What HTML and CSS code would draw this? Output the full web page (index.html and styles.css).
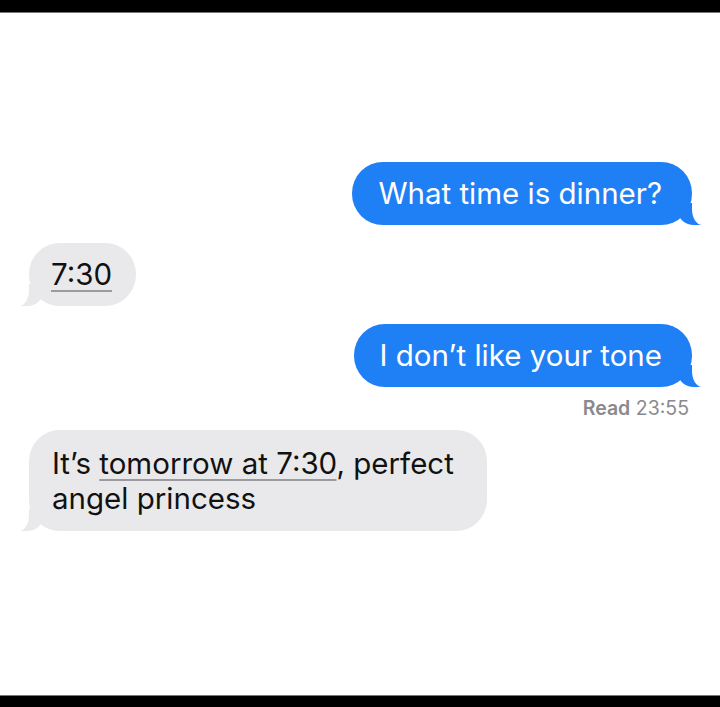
FILE: index.html
```html
<!DOCTYPE html>
<html lang="en">
<head>
  <meta charset="UTF-8">
  <meta name="viewport" content="width=device-width, initial-scale=1.0">
  <title>Messages</title>
  <link rel="stylesheet" href="styles.css">
</head>
<body>
  <div class="screen">
    <div class="bar bar-top"></div>

    <div class="thread">
      <div class="bubble sent">What time is dinner?</div>
      <div class="bubble received"><span class="link">7:30</span></div>
      <div class="bubble sent">I don’t like your tone</div>
      <div class="receipt"><strong>Read</strong> 23:55</div>
      <div class="bubble received wide">It’s <span class="link">tomorrow at 7:30</span>, perfect angel princess</div>
    </div>

    <div class="bar bar-bottom"></div>
  </div>
</body>
</html>
```

FILE: styles.css
```css
body {
  margin: 0;
  background: #fff;
  font-family: 'Inter', 'Liberation Sans', sans-serif;
  color: #111;
}
.screen {
  height: 707px;
  display: flex;
  flex-direction: column;
}
.bar {
  background: #000;
}
.bar-top {
  height: 12px;
  border-bottom: 1px solid #777;
}
.bar-bottom {
  height: 11px;
  border-top: 1px solid #777;
}
.thread {
  flex: 1;
  display: flex;
  flex-direction: column;
  padding: 149px 28px 0 29px;
}
.bubble {
  position: relative;
  font-size: 29.5px;
  line-height: 35px;
  padding: 14px 30px 14px 26px;
  border-radius: 31px;
  max-width: 420px;
}
.bubble + .bubble {
  margin-top: 18px;
}
.sent {
  align-self: flex-end;
  background: #1f7ff5;
  color: #fff;
}
.received {
  align-self: flex-start;
  background: #e9e9eb;
  padding: 14px 24px 14px 22px;
}
.received.wide {
  max-width: 404px;
  padding: 16px 31px 15px 23px;
  margin-top: 10px;
}

/* tails */
.sent::before,
.sent::after,
.received::before,
.received::after {
  content: "";
  position: absolute;
  bottom: 0;
  height: 22px;
}
.sent::before {
  right: -10px;
  width: 24px;
  background: #1f7ff5;
  border-bottom-left-radius: 16px 14px;
}
.sent::after {
  right: -20px;
  width: 20px;
  background: #fff;
  border-bottom-left-radius: 10px 16px;
}
.received::before {
  left: -10px;
  width: 24px;
  background: #e9e9eb;
  border-bottom-right-radius: 16px 14px;
}
.received::after {
  left: -20px;
  width: 20px;
  background: #fff;
  border-bottom-right-radius: 10px 16px;
}

.link {
  text-decoration: underline;
  text-decoration-color: #9a9aa0;
  text-decoration-thickness: 1.5px;
  text-underline-offset: 5px;
}
.receipt {
  align-self: flex-end;
  margin-top: 9px;
  padding-right: 3px;
  font-size: 19.5px;
  line-height: 24px;
  color: #8a8a8e;
}
.receipt strong {
  font-weight: 600;
}
```
